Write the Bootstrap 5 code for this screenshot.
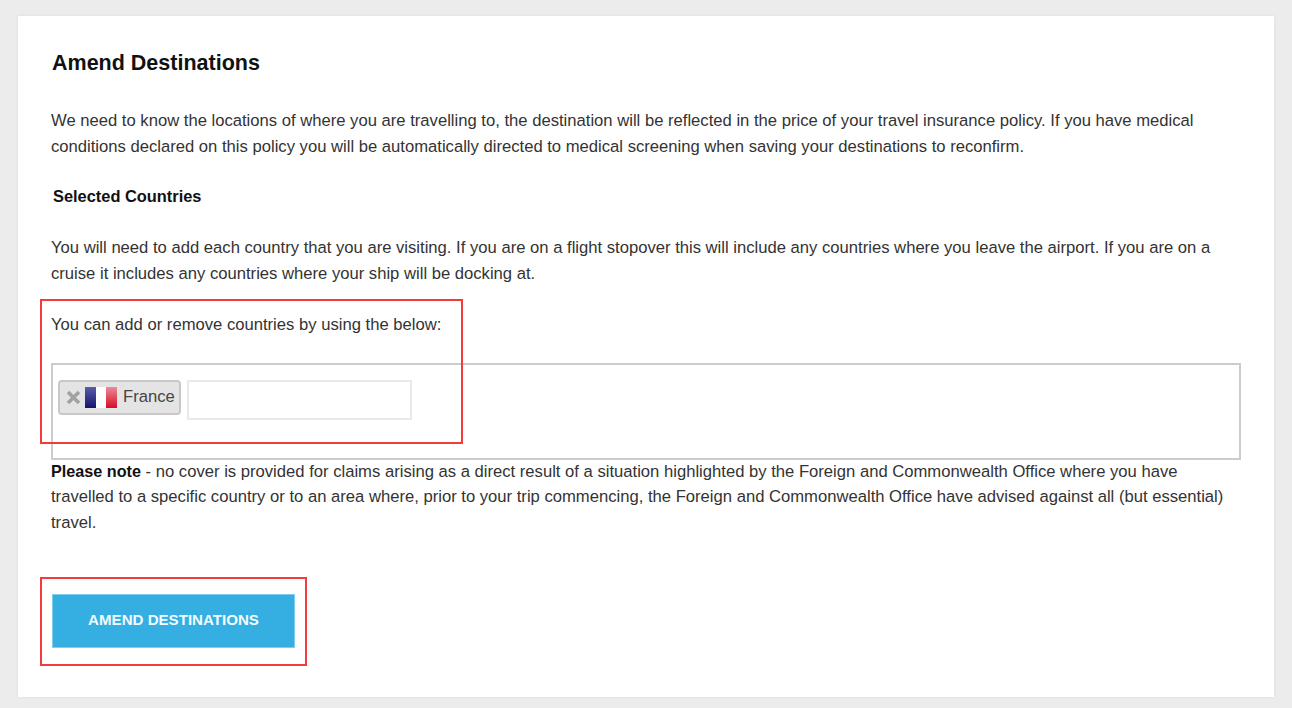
<!DOCTYPE html>
<html lang="en">
<head>
    <meta charset="UTF-8">
    <meta name="viewport" content="width=device-width, initial-scale=1.0">
    <title>Amend Destinations</title>
    <link href="https://cdn.jsdelivr.net/npm/bootstrap@5.3.0/dist/css/bootstrap.min.css" rel="stylesheet">
    <style>
        body {
            background: #ececec;
            font-family: "Liberation Sans", Arial, sans-serif;
            font-size: 16.64px;
            color: #333;
            height: 708px;
            overflow: hidden;
        }
        .page-wrap {
            padding: 16px 18px 11px 18px;
        }
        .amend-panel {
            position: relative;
            background: #fff;
            height: 681px;
            padding: 33px 33px 0 33px;
            box-shadow: 0 0 3px rgba(0, 0, 0, .08);
        }
        .amend-title {
            font-size: 21.5px;
            font-weight: 700;
            line-height: 28px;
            color: #111;
            margin: 0 0 31px 1px;
        }
        .body-copy {
            line-height: 25.5px;
            margin: 0;
        }
        .sub-title {
            font-size: 16.4px;
            font-weight: 700;
            color: #111;
            line-height: 20px;
            margin: 27px 0 29px 2px;
        }
        .add-line {
            margin: 26px 0 25px 0;
        }
        .country-box {
            width: 1190px;
            height: 97px;
            border: 2px solid #ccc;
            padding: 15px 5px;
            align-items: flex-start;
        }
        .country-chip {
            height: 35px;
            width: 123px;
            background: #e4e4e4;
            border: 2px solid #c8c8c8;
            border-radius: 4px;
            color: #444;
            padding-left: 6px;
        }
        .chip-x {
            width: 15px;
            height: 15px;
            margin-right: 4px;
            flex: none;
        }
        .chip-flag {
            width: 32px;
            height: 21px;
            margin-right: 6px;
            flex: none;
        }
        .country-input {
            width: 225px;
            height: 40px;
            border: 2px solid #eaeaea;
            margin-left: 6px;
            background: #fff;
            padding: 0 6px;
        }
        .note-copy {
            margin-top: -1px;
        }
        .note-copy strong {
            font-size: 16.2px;
            color: #111;
        }
        .amend-btn {
            display: block;
            width: 243px;
            height: 54px;
            margin: 59px 0 0 1px;
            padding-bottom: 8px;
            background: #35aee2;
            border: 1px solid #7fcdec;
            border-radius: 0;
            color: #f2fbff;
            font-size: 15.1px;
            font-weight: 700;
            text-transform: uppercase;
        }
        .amend-btn:hover {
            background: #35aee2;
            color: #fff;
        }
        .red-mark {
            position: absolute;
            border: 2px solid #f43b3b;
            pointer-events: none;
        }
        .mark-one {
            left: 22px;
            top: 283px;
            width: 423px;
            height: 145px;
        }
        .mark-two {
            left: 22px;
            top: 561px;
            width: 267px;
            height: 89px;
        }
    </style>
</head>
<body>
    <div class="page-wrap">
        <div class="amend-panel">
            <h1 class="amend-title">Amend Destinations</h1>
            <p class="body-copy">We need to know the locations of where you are travelling to, the destination will be reflected in the price of your travel insurance policy. If you have medical conditions declared on this policy you will be automatically directed to medical screening when saving your destinations to reconfirm.</p>
            <h2 class="sub-title">Selected Countries</h2>
            <p class="body-copy">You will need to add each country that you are visiting. If you are on a flight stopover this will include any countries where you leave the airport. If you are on a cruise it includes any countries where your ship will be docking at.</p>
            <p class="body-copy add-line">You can add or remove countries by using the below:</p>

            <div class="country-box d-flex">
                <div class="country-chip d-flex align-items-center">
                    <svg class="chip-x" viewBox="0 0 15 15"><path d="M2 2 L13 13 M13 2 L2 13" stroke="#a2a2a2" stroke-width="3.6" fill="none"/></svg>
                    <svg class="chip-flag" viewBox="0 0 32 21">
                        <defs>
                            <linearGradient id="flagBlue" x1="0" y1="0" x2="0" y2="1"><stop offset="0" stop-color="#5a5ea8"/><stop offset="1" stop-color="#14146e"/></linearGradient>
                            <linearGradient id="flagRed" x1="0" y1="0" x2="0" y2="1"><stop offset="0" stop-color="#ec8a96"/><stop offset="1" stop-color="#d40f26"/></linearGradient>
                        </defs>
                        <rect width="11" height="21" fill="url(#flagBlue)"/>
                        <rect x="11" width="11" height="21" fill="#fff"/>
                        <rect x="21" width="11" height="21" fill="url(#flagRed)"/>
                    </svg>
                    <span>France</span>
                </div>
                <input class="country-input" type="text" aria-label="Add country">
            </div>

            <p class="body-copy note-copy"><strong>Please note</strong> - no cover is provided for claims arising as a direct result of a situation highlighted by the Foreign and Commonwealth Office where you have travelled to a specific country or to an area where, prior to your trip commencing, the Foreign and Commonwealth Office have advised against all (but essential) travel.</p>

            <button type="button" class="btn amend-btn">Amend Destinations</button>

            <div class="red-mark mark-one"></div>
            <div class="red-mark mark-two"></div>
        </div>
    </div>

    <script src="https://cdn.jsdelivr.net/npm/bootstrap@5.3.0/dist/js/bootstrap.bundle.min.js"></script>
</body>
</html>
